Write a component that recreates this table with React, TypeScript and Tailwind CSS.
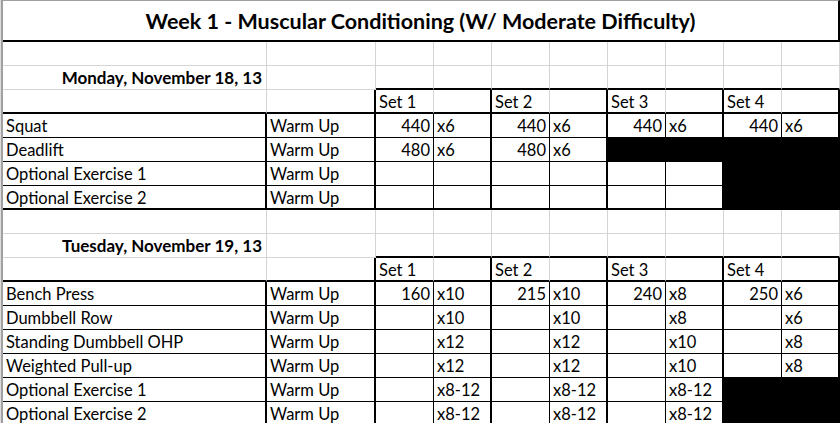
import React from "react";

type Line = "g" | "t" | "T";

const rightCls: Record<Line, string> = {
  g: "border-r border-r-[#d4d4d4]",
  t: "border-r border-r-black",
  T: "border-r-2 border-r-black",
};

const bottomCls: Record<Line, string> = {
  g: "border-b border-b-[#d4d4d4]",
  t: "border-b border-b-black",
  T: "border-b-2 border-b-black",
};

interface CellProps {
  text?: string;
  r: Line;
  b: Line;
  fill?: boolean;
  align?: "left" | "right";
  bold?: boolean;
}

const Cell = ({ text, r, b, fill, align = "left", bold }: CellProps) => (
  <div
    className={[
      "h-[24px] pt-[2px] leading-[20px] whitespace-nowrap overflow-hidden",
      fill ? "bg-black border-r border-b border-black" : `${rightCls[r]} ${bottomCls[b]}`,
      align === "right" ? "text-right pr-[3px]" : "pl-[3px]",
      bold ? "font-bold" : "",
    ].join(" ")}
  >
    {text}
  </div>
);

const setRights: Line[] = ["t", "T", "t", "T", "t", "T", "t", "T"];
const headRights: Line[] = ["g", "T", "g", "T", "g", "T", "g", "T"];

// blank spacer row
const BlankRow = () => (
  <>
    {Array.from({ length: 10 }).map((_, i) => (
      <Cell key={i} r="g" b="g" />
    ))}
  </>
);

const DayRow = ({ day }: { day: string }) => (
  <>
    <div className="h-[24px] pt-[2px] leading-[20px] text-right pr-[4px] text-[17px] font-bold whitespace-nowrap border-r border-r-[#d4d4d4] border-b border-b-[#d4d4d4]">
      {day}
    </div>
    <Cell r="g" b="g" />
    {headRights.map((_, i) => (
      <Cell key={i} r="g" b="T" />
    ))}
  </>
);

const SetHeaderRow = () => (
  <>
    <Cell r="g" b="T" />
    <Cell r="T" b="T" />
    {headRights.map((r, i) => (
      <Cell key={i} r={r} b="T" text={i % 2 === 0 ? `Set ${i / 2 + 1}` : ""} />
    ))}
  </>
);

interface Exercise {
  name: string;
  sets: string[]; // 8 values: weight, reps pairs
  black: number; // number of black cells from the right
  last?: boolean;
}

const ExerciseRow = ({ name, sets, black, last }: Exercise) => {
  const b: Line = last ? "T" : "t";
  return (
    <>
      <Cell text={name} r="T" b={b} />
      <Cell text="Warm Up" r="T" b={b} />
      {setRights.map((r, i) => (
        <Cell
          key={i}
          r={r}
          b={b}
          text={sets[i]}
          align={i % 2 === 0 ? "right" : "left"}
          fill={i >= 8 - black}
        />
      ))}
    </>
  );
};

const monday: Exercise[] = [
  { name: "Squat", sets: ["440", "x6", "440", "x6", "440", "x6", "440", "x6"], black: 0 },
  { name: "Deadlift", sets: ["480", "x6", "480", "x6", "", "", "", ""], black: 4 },
  { name: "Optional Exercise 1", sets: ["", "", "", "", "", "", "", ""], black: 2 },
  { name: "Optional Exercise 2", sets: ["", "", "", "", "", "", "", ""], black: 2, last: true },
];

const tuesday: Exercise[] = [
  { name: "Bench Press", sets: ["160", "x10", "215", "x10", "240", "x8", "250", "x6"], black: 0 },
  { name: "Dumbbell Row", sets: ["", "x10", "", "x10", "", "x8", "", "x6"], black: 0 },
  { name: "Standing Dumbbell OHP", sets: ["", "x12", "", "x12", "", "x10", "", "x8"], black: 0 },
  { name: "Weighted Pull-up", sets: ["", "x12", "", "x12", "", "x10", "", "x8"], black: 0 },
  { name: "Optional Exercise 1", sets: ["", "x8-12", "", "x8-12", "", "x8-12", "", ""], black: 2 },
  { name: "Optional Exercise 2", sets: ["", "x8-12", "", "x8-12", "", "x8-12", "", ""], black: 2 },
];

export default function App() {
  return (
    <div className="w-[840px] h-[423px] overflow-hidden bg-white text-black font-['Lato',sans-serif] text-[16.5px]">
      <div className="border-l border-l-[#dcdcdc]">
        <div className="border-l-2 border-l-[#a0a0a0]">
          <div className="grid grid-cols-[264px_109px_repeat(8,58px)]">
            <div className="col-span-10 h-[42px] flex items-center justify-center border-t border-t-[#a0a0a0] border-b-2 border-b-black border-r-2 border-r-black text-[21.5px] font-bold leading-[26px]">
              Week 1 - Muscular Conditioning (W/ Moderate Difficulty)
            </div>
            <BlankRow />
            <DayRow day="Monday, November 18, 13" />
            <SetHeaderRow />
            {monday.map((e) => (
              <ExerciseRow key={e.name} {...e} />
            ))}
            <BlankRow />
            <DayRow day="Tuesday, November 19, 13" />
            <SetHeaderRow />
            {tuesday.map((e) => (
              <ExerciseRow key={e.name} {...e} />
            ))}
          </div>
        </div>
      </div>
    </div>
  );
}
